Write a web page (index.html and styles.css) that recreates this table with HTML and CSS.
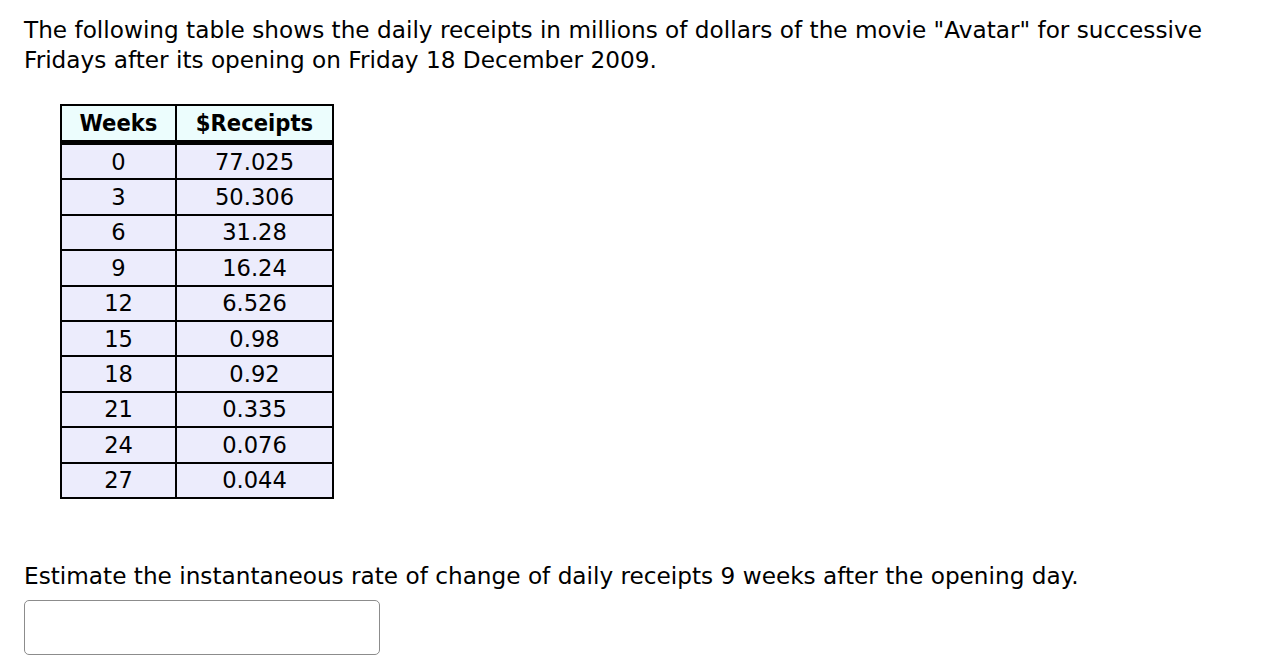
FILE: index.html
```html
<!DOCTYPE html>
<html>
<head>
<meta charset="utf-8">
<link rel="stylesheet" href="styles.css">
</head>
<body>
<div class="page">
  <p class="intro">The following table shows the daily receipts in millions of dollars of the movie "Avatar" for successive Fridays after its opening on Friday 18 December 2009.</p>
  <table class="data">
    <thead>
      <tr><th>Weeks</th><th>$Receipts</th></tr>
    </thead>
    <tbody>
      <tr><td>0</td><td>77.025</td></tr>
      <tr><td>3</td><td>50.306</td></tr>
      <tr><td>6</td><td>31.28</td></tr>
      <tr><td>9</td><td>16.24</td></tr>
      <tr><td>12</td><td>6.526</td></tr>
      <tr><td>15</td><td>0.98</td></tr>
      <tr><td>18</td><td>0.92</td></tr>
      <tr><td>21</td><td>0.335</td></tr>
      <tr><td>24</td><td>0.076</td></tr>
      <tr><td>27</td><td>0.044</td></tr>
    </tbody>
  </table>
  <p class="question">Estimate the instantaneous rate of change of daily receipts 9 weeks after the opening day.</p>
  <input class="answer" type="text">
</div>
</body>
</html>
```

FILE: styles.css
```css
html, body {
  margin: 0;
  padding: 0;
  background: #ffffff;
}
.page {
  padding: 15px 24px 0 24px;
  font-family: "DejaVu Sans", sans-serif;
  font-size: 23.2px;
  color: #000;
}
.intro {
  margin: 0;
  width: 1200px;
  line-height: 30px;
}
.data {
  margin: 29px 0 0 36px;
  border-collapse: collapse;
  border: 2px solid #000;
  font-size: 22.6px;
}
.data th, .data td {
  border: 2px solid #000;
  text-align: center;
  padding: 0;
}
.data th {
  background: #ecfdfd;
  font-family: "DejaVu Sans Condensed", "DejaVu Sans", sans-serif;
  font-size: 23.5px;
  font-weight: bold;
  height: 34px;
  border-bottom: 5px solid #000;
}
.data th:first-child { width: 113px; }
.data th:last-child { width: 155px; }
.data td {
  background: #ececfc;
  height: 33.4px;
}
.question {
  margin: 62px 0 0 0;
  line-height: 30px;
}
.answer {
  display: block;
  margin-top: 9px;
  width: 356px;
  height: 55px;
  box-sizing: border-box;
  border: 1px solid #8c8c8c;
  border-radius: 5px;
  background: #fff;
}
```
